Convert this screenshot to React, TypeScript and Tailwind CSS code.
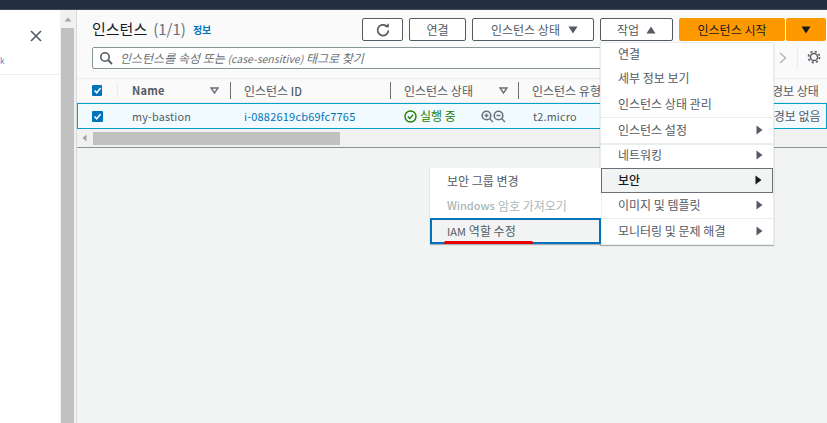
import React from "react";

const font = { fontFamily: '"Noto Sans CJK KR","Noto Sans","Open Sans",sans-serif' };

function Caret({ up = false, c = "#545b64", s = 10 }: { up?: boolean; c?: string; s?: number }) {
  return (
    <svg width={s} height={8} viewBox="0 0 10 8" className="shrink-0">
      <path d={up ? "M5 0.5 L9.5 7.5 L0.5 7.5 Z" : "M0.5 0.5 L9.5 0.5 L5 7.5 Z"} fill={c} />
    </svg>
  );
}

function Right({ c = "#545b64" }: { c?: string }) {
  return (
    <svg width={7} height={10} viewBox="0 0 7 10" className="shrink-0">
      <path d="M0.5 0.5 L6.5 5 L0.5 9.5 Z" fill={c} />
    </svg>
  );
}

function Check() {
  return (
    <span className="flex h-[11px] w-[11px] items-center justify-center rounded-[1px] bg-[#0073bb]">
      <svg width={9} height={9} viewBox="0 0 9 9">
        <path d="M1.5 4.5 L3.7 6.8 L7.6 2" fill="none" stroke="#fff" strokeWidth={1.5} />
      </svg>
    </span>
  );
}

function FilterCaret() {
  return (
    <svg width={9} height={7} viewBox="0 0 9 7" className="shrink-0">
      <path d="M1 1 L8 1 L4.5 6 Z" fill="none" stroke="#687078" strokeWidth={1.4} />
    </svg>
  );
}

function MenuItem({ label, h, active = false }: { label: string; h: string; active?: boolean }) {
  return (
    <div
      className={`flex items-center justify-between pr-[10px] text-[12px] ${h} ${
        active ? "border border-[#687078] bg-[#f2f3f3] pl-[16px] font-medium text-[#16191f]" : "pl-[17px] text-[#545b64]"
      }`}
    >
      <span>{label}</span>
      <Right c={active ? "#16191f" : "#545b64"} />
    </div>
  );
}

export default function App() {
  return (
    <div className="flex h-[423px] w-[827px] flex-col overflow-hidden bg-white" style={font}>
      <div className="h-[10px] shrink-0 border-b border-[#3f4a58] bg-[#232f3e]" />
      <div className="flex min-h-0 flex-1">
        {/* left panel */}
        <div className="flex w-[60px] shrink-0 flex-col bg-white">
          <div className="relative h-[65px] shrink-0 border-b border-[#eaeded]">
            <svg width={12} height={12} viewBox="0 0 12 12" className="absolute left-[30px] top-[20px]">
              <path d="M1 1 L11 11 M11 1 L1 11" stroke="#545b64" strokeWidth={1.6} />
            </svg>
            <span className="absolute left-0 top-[46px] text-[8px] leading-[10px] text-[#4a7fd0]">k</span>
          </div>
        </div>
        {/* page scrollbar */}
        <div className="flex w-[16px] shrink-0 flex-col bg-[#f1f1f1] pl-[1px]">
          <div className="flex h-[18px] w-[13px] shrink-0 items-center justify-center">
            <svg width={8} height={5} viewBox="0 0 8 5">
              <path d="M4 0.5 L7.5 4.5 L0.5 4.5 Z" fill="#a3a3a3" />
            </svg>
          </div>
          <div className="w-[13px] flex-1 bg-[#c1c1c1]" />
        </div>
        {/* main */}
        <div className="relative min-w-0 flex-1 border-l border-[#d5dbdb] bg-[#f2f3f3]">
          <div className="bg-[#fafafa]">
            {/* header */}
            <div className="flex h-[35px] items-start pl-[15px] pt-[8px]">
              <span className="text-[15px] leading-[22px] text-[#16191f]">인스턴스</span>
              <span className="ml-[6px] text-[15px] leading-[22px] text-[#687078]">(1/1)</span>
              <span className="ml-[7px] mt-[1px] text-[10px] font-bold leading-[22px] text-[#0073bb]">정보</span>
              <div className="ml-[auto] flex items-center gap-[6px] pr-[1px] text-[12px] text-[#545b64]">
                <button className="flex h-[23px] w-[41px] items-center justify-center rounded-[2px] border border-[#545b64] bg-white">
                  <svg width={14} height={14} viewBox="0 0 14 14" fill="none">
                    <path d="M12.4 7.4 A5.4 5.4 0 1 1 10.4 3" stroke="#545b64" strokeWidth={1.7} />
                    <path d="M8.6 3.9 L12.8 4.4 L12.8 0.2 Z" fill="#545b64" />
                  </svg>
                </button>
                <button className="flex h-[23px] w-[57px] items-center justify-center rounded-[2px] border border-[#545b64] bg-white">
                  연결
                </button>
                <button className="flex h-[23px] w-[122px] items-center gap-[8px] rounded-[2px] border border-[#545b64] bg-white pl-[18px]">
                  인스턴스 상태 <Caret />
                </button>
                <button className="flex h-[23px] w-[73px] items-center gap-[7px] rounded-[2px] border border-[#545b64] bg-white pl-[16px]">
                  작업 <Caret up />
                </button>
                <div className="flex gap-[1px]">
                  <button className="flex h-[23px] w-[106px] items-center justify-center rounded-[2px] bg-[#ff9900] text-[#16191f]">
                    인스턴스 시작
                  </button>
                  <button className="flex h-[23px] w-[40px] items-center justify-center rounded-[2px] bg-[#ff9900]">
                    <Caret c="#16191f" />
                  </button>
                </div>
              </div>
            </div>
            {/* search */}
            <div className="flex h-[33px] items-start pl-[15px] pt-[2px]">
              <div className="flex h-[22px] w-[674px] items-center rounded-[2px] border border-[#879596] bg-white pl-[6px]">
                <svg width={14} height={14} viewBox="0 0 14 14" fill="none" className="shrink-0">
                  <circle cx={6} cy={6} r={4.2} stroke="#545b64" strokeWidth={1.6} />
                  <path d="M9 9 L13 13" stroke="#545b64" strokeWidth={1.8} />
                </svg>
                <span className="ml-[7px] text-[12px] italic text-[#687078]">
                  인스턴스를 속성 또는 <span className="text-[10.5px]">(case-sensitive)</span> 태그로 찾기
                </span>
              </div>
              <svg width={8} height={12} viewBox="0 0 8 12" fill="none" className="ml-[13px] mt-[5px]">
                <path d="M1 1 L6.5 6 L1 11" stroke="#aab7b8" strokeWidth={1.4} />
              </svg>
              <div className="ml-[10px] h-[22px] w-px bg-[#eaeded]" />
              <svg width={14} height={14} viewBox="0 0 14 14" fill="none" className="ml-[9px] mt-[3px]">
                <circle cx={7} cy={7} r={3.6} stroke="#545b64" strokeWidth={1.5} />
                <circle cx={7} cy={7} r={5.6} stroke="#545b64" strokeWidth={1.6} strokeDasharray="2.2 2.2" />
              </svg>
            </div>
          </div>
          {/* table */}
          <div className="border-b border-[#879596] bg-[#f1f1f1]">
            <div className="flex h-[25px] items-center border-y border-[#eaeded] bg-[#fafafa] text-[12px] text-[#545b64]">
              <div className="flex w-[41px] shrink-0 items-center pl-[15px]">
                <Check />
                <span className="ml-[15px] h-[15px] w-px bg-[#eaeded]" />
              </div>
              <div className="flex w-[112px] shrink-0 items-center justify-between pl-[14px] pr-[11px]">
                <span className="text-[11px] font-bold tracking-[0.2px]">Name</span>
                <FilterCaret />
              </div>
              <span className="h-[17px] w-px bg-[#687078]" />
              <div className="w-[159px] shrink-0 pl-[13px]">
                인스턴스 <span className="text-[11px] font-medium">ID</span>
              </div>
              <span className="h-[17px] w-px bg-[#687078]" />
              <div className="flex w-[127px] shrink-0 items-center justify-between pl-[13px] pr-[10px]">
                <span>인스턴스 상태</span>
                <FilterCaret />
              </div>
              <span className="h-[17px] w-px bg-[#687078]" />
              <div className="flex-1 overflow-hidden whitespace-nowrap pl-[13px]">
                인스턴스 유형
                <span className="ml-[171px]">경보 상태</span>
              </div>
            </div>
            <div className="flex h-[26px] items-center border border-[#00a1c9] bg-[#f1faff] text-[11px] tracking-[0.2px] text-[#545b64]">
              <div className="w-[40px] shrink-0 pl-[14px]">
                <Check />
              </div>
              <div className="w-[112px] shrink-0 pl-[14px] text-[10.8px]">my-bastion</div>
              <div className="w-[161px] shrink-0 pl-[14px] text-[#0073bb]">i-0882619cb69fc7765</div>
              <div className="flex w-[128px] shrink-0 items-center pl-[13px]">
                <svg width={13} height={13} viewBox="0 0 13 13" fill="none" className="shrink-0">
                  <circle cx={6.5} cy={6.5} r={5.5} stroke="#1d8102" strokeWidth={1.4} />
                  <path d="M3.8 6.6 L5.8 8.5 L9.2 4.6" stroke="#1d8102" strokeWidth={1.4} />
                </svg>
                <span className="ml-[3px] text-[12px] tracking-normal text-[#1d8102]">실행 중</span>
                <svg width={25} height={13} viewBox="0 0 25 13" fill="none" className="ml-[25px] shrink-0">
                  <circle cx={5.5} cy={5.5} r={4.3} stroke="#687078" strokeWidth={1.6} />
                  <path d="M8.5 8.5 L12 12 M3.5 5.5 H7.5 M5.5 3.5 V7.5" stroke="#687078" strokeWidth={1.4} />
                  <circle cx={17.5} cy={5.5} r={4.3} stroke="#687078" strokeWidth={1.6} />
                  <path d="M20.5 8.5 L24 12 M15.5 5.5 H19.5" stroke="#687078" strokeWidth={1.4} />
                </svg>
              </div>
              <div className="flex-1 overflow-hidden whitespace-nowrap pl-[14px]">
                <span className="text-[10.8px]">t2.micro</span>
                <span className="ml-[197px] text-[12px] tracking-normal">경보 없음</span>
              </div>
            </div>
            {/* horizontal scrollbar */}
            <div className="flex h-[18px] items-center">
              <svg width={16} height={8} viewBox="0 0 16 8" className="shrink-0">
                <path d="M9.5 0.5 L9.5 7.5 L5.5 4 Z" fill="#a3a3a3" />
              </svg>
              <div className="h-[13px] w-[247px] bg-[#c1c1c1]" />
            </div>
          </div>

          {/* actions menu */}
          <div className="absolute left-[523px] top-[32px] z-10 w-[174px] border border-[#eaeded] bg-white shadow-[0_1px_1px_rgba(0,28,36,0.3)]">
            <div className="flex h-[21px] items-center pl-[17px] text-[12px] text-[#545b64]">연결</div>
            <div className="flex h-[27px] items-center pl-[17px] text-[12px] text-[#545b64]">세부 정보 보기</div>
            <div className="flex h-[26px] items-center pl-[17px] text-[12px] text-[#545b64]">인스턴스 상태 관리</div>
            <div className="border-t border-[#eaeded]">
              <MenuItem label="인스턴스 설정" h="h-[25px] pb-[1px]" />
            </div>
            <div className="border-t-2 border-[#eaeded]">
              <MenuItem label="네트워킹" h="h-[23px] pb-[3px]" />
            </div>
            <MenuItem label="보안" h="h-[25px] pb-[1px]" active />
            <MenuItem label="이미지 및 템플릿" h="h-[25px] pb-[1px]" />
            <div className="border-t border-[#eaeded]">
              <MenuItem label="모니터링 및 문제 해결" h="h-[25px] pb-[2px]" />
            </div>
          </div>

          {/* security submenu */}
          <div className="absolute left-[353px] top-[158px] z-10 w-[171px] bg-white text-[12px] shadow-[0_1px_1px_rgba(0,28,36,0.3)]">
            <div className="flex h-[25px] items-center pl-[17px] text-[#545b64]">보안 그룹 변경</div>
            <div className="flex h-[25px] items-center pl-[17px] text-[#aab7b8]">
              <span className="mr-[3px] text-[11px] font-medium">Windows</span> 암호 가져오기
            </div>
            <div className="relative flex h-[26px] items-center border-2 border-[#0073bb] bg-[#f2f3f3] pl-[15px] text-[#545b64]">
              <span className="mr-[3px] text-[11px]">IAM</span> 역할 수정
              <span className="absolute left-[12px] top-[21px] h-[2.5px] w-[89px] rounded-full bg-[#e60000]" />
            </div>
          </div>
        </div>
      </div>
    </div>
  );
}
